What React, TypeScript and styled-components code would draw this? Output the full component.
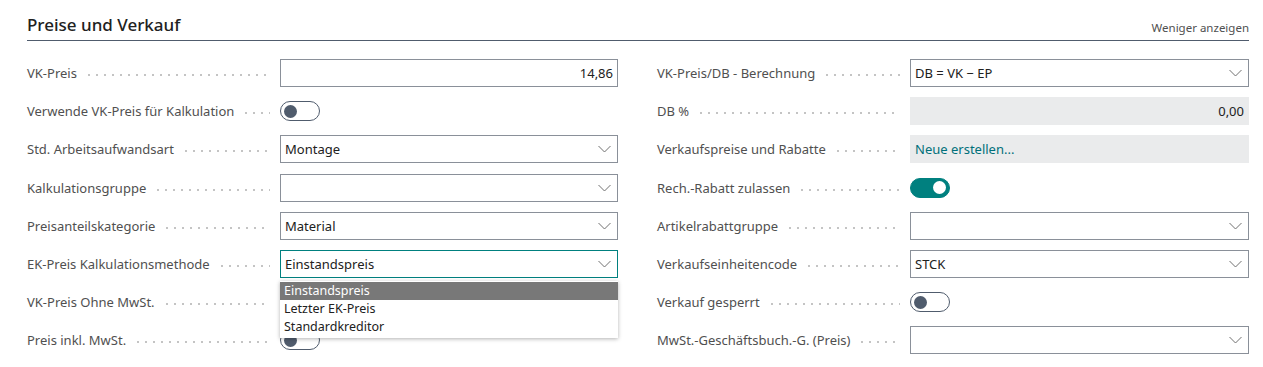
import React from 'react';
import styled, {createGlobalStyle} from 'styled-components';

const GlobalStyle = createGlobalStyle`
    body {
        margin: 0;
        background: #ffffff;
        font-family: "Noto Sans", "Open Sans", sans-serif;
    }
`;

type Field =
    | {label: string; kind: 'text'; value: string; readOnly?: boolean}
    | {label: string; kind: 'select'; value: string; focused?: boolean; options?: string[]}
    | {label: string; kind: 'toggle'; on: boolean}
    | {label: string; kind: 'link'; value: string};

const leftFields: Field[] = [
    {label: 'VK-Preis', kind: 'text', value: '14,86'},
    {label: 'Verwende VK-Preis für Kalkulation', kind: 'toggle', on: false},
    {label: 'Std. Arbeitsaufwandsart', kind: 'select', value: 'Montage'},
    {label: 'Kalkulationsgruppe', kind: 'select', value: ''},
    {label: 'Preisanteilskategorie', kind: 'select', value: 'Material'},
    {label: 'EK-Preis Kalkulationsmethode', kind: 'select', value: 'Einstandspreis', focused: true,
        options: ['Einstandspreis', 'Letzter EK-Preis', 'Standardkreditor']},
    {label: 'VK-Preis Ohne MwSt.', kind: 'toggle', on: false},
    {label: 'Preis inkl. MwSt.', kind: 'toggle', on: false},
];

const rightFields: Field[] = [
    {label: 'VK-Preis/DB - Berechnung', kind: 'select', value: 'DB = VK − EP'},
    {label: 'DB %', kind: 'text', value: '0,00', readOnly: true},
    {label: 'Verkaufspreise und Rabatte', kind: 'link', value: 'Neue erstellen...'},
    {label: 'Rech.-Rabatt zulassen', kind: 'toggle', on: true},
    {label: 'Artikelrabattgruppe', kind: 'select', value: ''},
    {label: 'Verkaufseinheitencode', kind: 'select', value: 'STCK'},
    {label: 'Verkauf gesperrt', kind: 'toggle', on: false},
    {label: 'MwSt.-Geschäftsbuch.-G. (Preis)', kind: 'select', value: ''},
];

const Chevron: React.FC = () => (
    <svg width="13" height="8" viewBox="0 0 13 8">
        <path d="M0.5 1 L6.5 7 L12.5 1" fill="none" stroke="#707070" strokeWidth="1"/>
    </svg>
);

const FieldControl: React.FC<{field: Field}> = ({field}) => {
    switch (field.kind) {
        case 'text':
            return <TextBox $readOnly={field.readOnly}>{field.value}</TextBox>;
        case 'link':
            return <LinkBox>{field.value}</LinkBox>;
        case 'toggle':
            return (
                <ToggleCell>
                    <Toggle $on={field.on}><Knob $on={field.on}/></Toggle>
                </ToggleCell>
            );
        case 'select':
            return (
                <SelectWrap>
                    <SelectBox $focused={field.focused}>
                        <span>{field.value}</span>
                        <Chevron/>
                    </SelectBox>
                    {field.options && (
                        <Menu>
                            {field.options.map((o, i) => (
                                <MenuItem key={o} $selected={i === 0}>{o}</MenuItem>
                            ))}
                        </Menu>
                    )}
                </SelectWrap>
            );
    }
};

const Column: React.FC<{fields: Field[]}> = ({fields}) => (
    <ColumnBox>
        {fields.map((f) => (
            <Row key={f.label}>
                <LabelCell>
                    <Label>{f.label}</Label>
                    <Leader/>
                </LabelCell>
                <FieldControl field={f}/>
            </Row>
        ))}
    </ColumnBox>
);

const App: React.FC = () => (
    <>
        <GlobalStyle/>
        <Page>
            <Header>
                <Title>Preise und Verkauf</Title>
                <ShowLess>Weniger anzeigen</ShowLess>
            </Header>
            <Columns>
                <Column fields={leftFields}/>
                <Column fields={rightFields}/>
            </Columns>
        </Page>
    </>
);

const Page = styled.div`
    padding: 0 14px 0 27px;
`;

const Header = styled.div`
    display: flex;
    justify-content: space-between;
    align-items: flex-end;
    height: 41px;
    border-bottom: 1px solid #505c6d;
    box-sizing: border-box;
    padding-bottom: 4px;
`;

const Title = styled.h2`
    margin: 0;
    font-size: 17px;
    font-weight: 500;
    color: #212121;
`;

const ShowLess = styled.span`
    font-size: 11.5px;
    color: #505050;
    margin-bottom: 1px;
`;

const Columns = styled.div`
    display: grid;
    grid-template-columns: 591px 592px;
    column-gap: 39px;
    padding-top: 13px;
`;

const ColumnBox = styled.div`
    display: flex;
    flex-direction: column;
`;

const Row = styled.div`
    display: flex;
    align-items: center;
    height: 38.2px;
`;

const LabelCell = styled.div`
    display: flex;
    align-items: center;
    width: 253px;
    flex-shrink: 0;
    padding-right: 10px;
    box-sizing: border-box;
`;

const Label = styled.span`
    font-size: 13px;
    color: #505050;
    white-space: nowrap;
`;

const Leader = styled.span`
    flex: 1;
    margin-left: 8px;
    height: 2px;
    margin-top: 4px;
    background-image: radial-gradient(circle, #c4c4c4 0.8px, transparent 1px);
    background-size: 8px 2px;
    background-repeat: repeat-x;
`;

const BoxBase = styled.div`
    flex: 1;
    height: 28px;
    box-sizing: border-box;
    display: flex;
    align-items: center;
    font-size: 13px;
    color: #212121;
    padding: 0 4px;
`;

const TextBox = styled(BoxBase)<{$readOnly?: boolean}>`
    justify-content: flex-end;
    border: 1px solid ${(p) => (p.$readOnly ? '#eaebec' : '#8a9099')};
    background: ${(p) => (p.$readOnly ? '#eaebec' : '#ffffff')};
`;

const LinkBox = styled(BoxBase)`
    border: 1px solid #eaebec;
    background: #eaebec;
    color: #00707a;
`;

const SelectWrap = styled.div`
    flex: 1;
    position: relative;
    display: flex;
`;

const SelectBox = styled(BoxBase)<{$focused?: boolean}>`
    justify-content: space-between;
    border: 1px solid ${(p) => (p.$focused ? '#00807f' : '#8a9099')};
    background: #ffffff;
    padding-right: 6px;
`;

const Menu = styled.div`
    position: absolute;
    left: 0;
    right: 0;
    top: 31px;
    background: #ffffff;
    padding: 1px 0 2px;
    box-shadow: 0 1px 4px rgba(0, 0, 0, 0.3);
    z-index: 2;
`;

const MenuItem = styled.div<{$selected?: boolean}>`
    height: 18px;
    line-height: 18px;
    padding: 0 4px;
    font-size: 12.5px;
    background: ${(p) => (p.$selected ? '#787878' : 'transparent')};
    color: ${(p) => (p.$selected ? '#ffffff' : '#212121')};
`;

const ToggleCell = styled.div`
    flex: 1;
    display: flex;
    align-items: center;
`;

const Toggle = styled.div<{$on: boolean}>`
    width: 40px;
    height: 20px;
    box-sizing: border-box;
    border-radius: 10px;
    border: 1px solid ${(p) => (p.$on ? '#00807f' : '#505c6d')};
    background: ${(p) => (p.$on ? '#00807f' : '#ffffff')};
    display: flex;
    align-items: center;
    justify-content: ${(p) => (p.$on ? 'flex-end' : 'flex-start')};
    padding: 0 3px;
`;

const Knob = styled.div<{$on: boolean}>`
    width: 13px;
    height: 13px;
    border-radius: 50%;
    background: ${(p) => (p.$on ? '#ffffff' : '#505c6d')};
`;

export default App;
